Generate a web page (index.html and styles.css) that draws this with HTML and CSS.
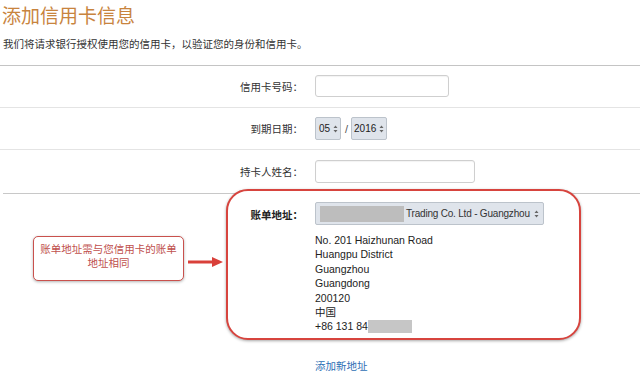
FILE: index.html
```html
<!DOCTYPE html>
<html lang="zh-CN">
<head>
<meta charset="utf-8">
<title>添加信用卡信息</title>
<link rel="stylesheet" href="styles.css">
</head>
<body>
<div class="page">
  <h1 class="title">添加信用卡信息</h1>
  <p class="intro">我们将请求银行授权使用您的信用卡，以验证您的身份和信用卡。</p>
  <div class="form">
    <div class="row row-first">
      <div class="label">信用卡号码：</div>
      <div class="field"><div class="input input-card"></div></div>
    </div>
    <div class="row row-date">
      <div class="label">到期日期：</div>
      <div class="field date">
        <div class="sel sel-month"><span>05</span><svg class="updown" viewBox="0 0 5 8" width="5" height="8"><path d="M2.5 0.5 L4.5 3 H0.5 Z M2.5 7.5 L4.5 5 H0.5 Z" fill="#666"/></svg></div>
        <span class="slash">/</span>
        <div class="sel sel-year"><span>2016</span><svg class="updown" viewBox="0 0 5 8" width="5" height="8"><path d="M2.5 0.5 L4.5 3 H0.5 Z M2.5 7.5 L4.5 5 H0.5 Z" fill="#666"/></svg></div>
      </div>
    </div>
    <div class="row row-dark">
      <div class="label">持卡人姓名：</div>
      <div class="field"><div class="input input-name"></div></div>
    </div>
    <div class="row row-address">
      <div class="label label-bold">账单地址：</div>
      <div class="field address">
        <div class="sel sel-address"><span class="blur blur-company"></span><span class="company">Trading Co. Ltd - Guangzhou</span><svg class="updown" viewBox="0 0 5 8" width="5" height="8"><path d="M2.5 0.5 L4.5 3 H0.5 Z M2.5 7.5 L4.5 5 H0.5 Z" fill="#666"/></svg></div>
        <div class="addr-lines">
          <div>No. 201 Haizhunan Road</div>
          <div>Huangpu District</div>
          <div>Guangzhou</div>
          <div>Guangdong</div>
          <div>200120</div>
          <div>中国</div>
          <div class="phone">+86 131 84<span class="blur blur-phone"></span></div>
        </div>
        <a class="add-link" href="#">添加新地址</a>
      </div>
    </div>
  </div>
  <div class="highlight"></div>
  <div class="callout">账单地址需与您信用卡的账单<br>地址相同</div>
  <svg class="arrow" viewBox="0 0 36 12" width="36" height="12"><path d="M0 6 H26" stroke="#d9403a" stroke-width="3"/><path d="M24 1 L35 6 L24 11 Z" fill="#d9403a"/></svg>
</div>
</body>
</html>
```
FILE: styles.css
```css
html, body {
  margin: 0;
  padding: 0;
  background: #ffffff;
}
body {
  font-family: "Liberation Sans", "Noto Sans CJK SC", sans-serif;
  color: #333333;
}
.page {
  position: relative;
  width: 640px;
  height: 375px;
  overflow: hidden;
}
.title {
  margin: 0;
  padding: 5px 0 0 2px;
  font-size: 19px;
  line-height: 24px;
  font-weight: normal;
  color: #c8843e;
}
.intro {
  margin: 0;
  padding: 7px 0 0 3px;
  font-size: 10.5px;
  line-height: 16px;
  color: #333333;
  height: 29px;
}
.form {
  border-top: 1px solid #c4c4c4;
}
.row {
  display: grid;
  grid-template-columns: 303px auto;
  column-gap: 12px;
  align-items: center;
  border-bottom: 1px solid #e4e4e4;
}
.row-first {
  padding: 9px 0 10px;
}
.row-date {
  padding: 9px 0 9px;
}
.row-dark {
  border-bottom: 1px solid #c8c8c8;
  margin-left: 3px;
  grid-template-columns: 300px auto;
  padding: 10px 0 10px;
}
.label {
  text-align: right;
  font-size: 10.5px;
  color: #333333;
}
.label-bold {
  font-weight: bold;
  color: #222222;
}
.field {
  display: flex;
  align-items: center;
}
.input {
  box-sizing: border-box;
  border: 1px solid #cfcfcf;
  border-radius: 3px;
  background: #ffffff;
  box-shadow: inset 0 1px 1px rgba(0,0,0,0.05);
}
.input-card {
  width: 134px;
  height: 22px;
}
.input-name {
  width: 160px;
  height: 23px;
}
.sel {
  display: flex;
  align-items: center;
  box-sizing: border-box;
  height: 23px;
  border: 1px solid #bcc3cb;
  border-radius: 2px;
  background: #dfe4eb;
  font-size: 10px;
  color: #222222;
  padding: 0 2px 0 3px;
}
.sel-month {
  width: 26px;
  justify-content: space-between;
}
.sel-year {
  width: 36px;
  justify-content: space-between;
  padding: 0 2px 0 2px;
}
.slash {
  font-size: 11px;
  color: #555555;
  margin: 0 3px 0 4px;
}
.updown {
  flex: none;
  display: block;
}
.row-address {
  align-items: start;
  border-bottom: none;
  padding: 8px 0 0;
  position: relative;
  z-index: 2;
}
.row-address .label {
  padding-top: 5px;
}
.address {
  flex-direction: column;
  align-items: flex-start;
}
.sel-address {
  width: 229px;
  font-size: 10px;
  letter-spacing: -0.2px;
  padding: 0 4px 0 4px;
}
.blur {
  display: inline-block;
  background: #bdbdbd;
  filter: blur(0.6px);
}
.blur-company {
  flex: none;
  width: 84px;
  height: 16px;
  margin-right: 2px;
}
.company {
  flex: 1 1 auto;
  white-space: nowrap;
  color: #333333;
}
.sel-address .updown {
  margin-left: 3px;
}
.addr-lines {
  margin-top: 8px;
  font-size: 10.5px;
  line-height: 14.4px;
  color: #222222;
}
.phone {
  display: flex;
  align-items: center;
}
.blur-phone {
  width: 44px;
  height: 13px;
  background: #c6c6c6;
}
.add-link {
  margin-top: 25px;
  font-size: 10.5px;
  line-height: 14px;
  color: #2f6fb5;
  text-decoration: none;
}
.highlight {
  position: absolute;
  left: 226px;
  top: 189px;
  width: 351px;
  height: 147px;
  border: 2px solid #d7443e;
  border-radius: 22px;
  background: #ffffff;
  box-shadow: 0 1px 3px rgba(0,0,0,0.35);
  z-index: 1;
}
.callout {
  position: absolute;
  left: 33px;
  top: 236px;
  width: 151px;
  height: 45px;
  padding-top: 5px;
  box-sizing: border-box;
  border: 1.5px solid #c9514d;
  border-radius: 5px;
  background: #ffffff;
  box-shadow: 0 1px 3px rgba(0,0,0,0.3);
  text-align: center;
  font-size: 10.5px;
  line-height: 14px;
  color: #c0504d;
}
.arrow {
  position: absolute;
  left: 188px;
  top: 256px;
}
```
